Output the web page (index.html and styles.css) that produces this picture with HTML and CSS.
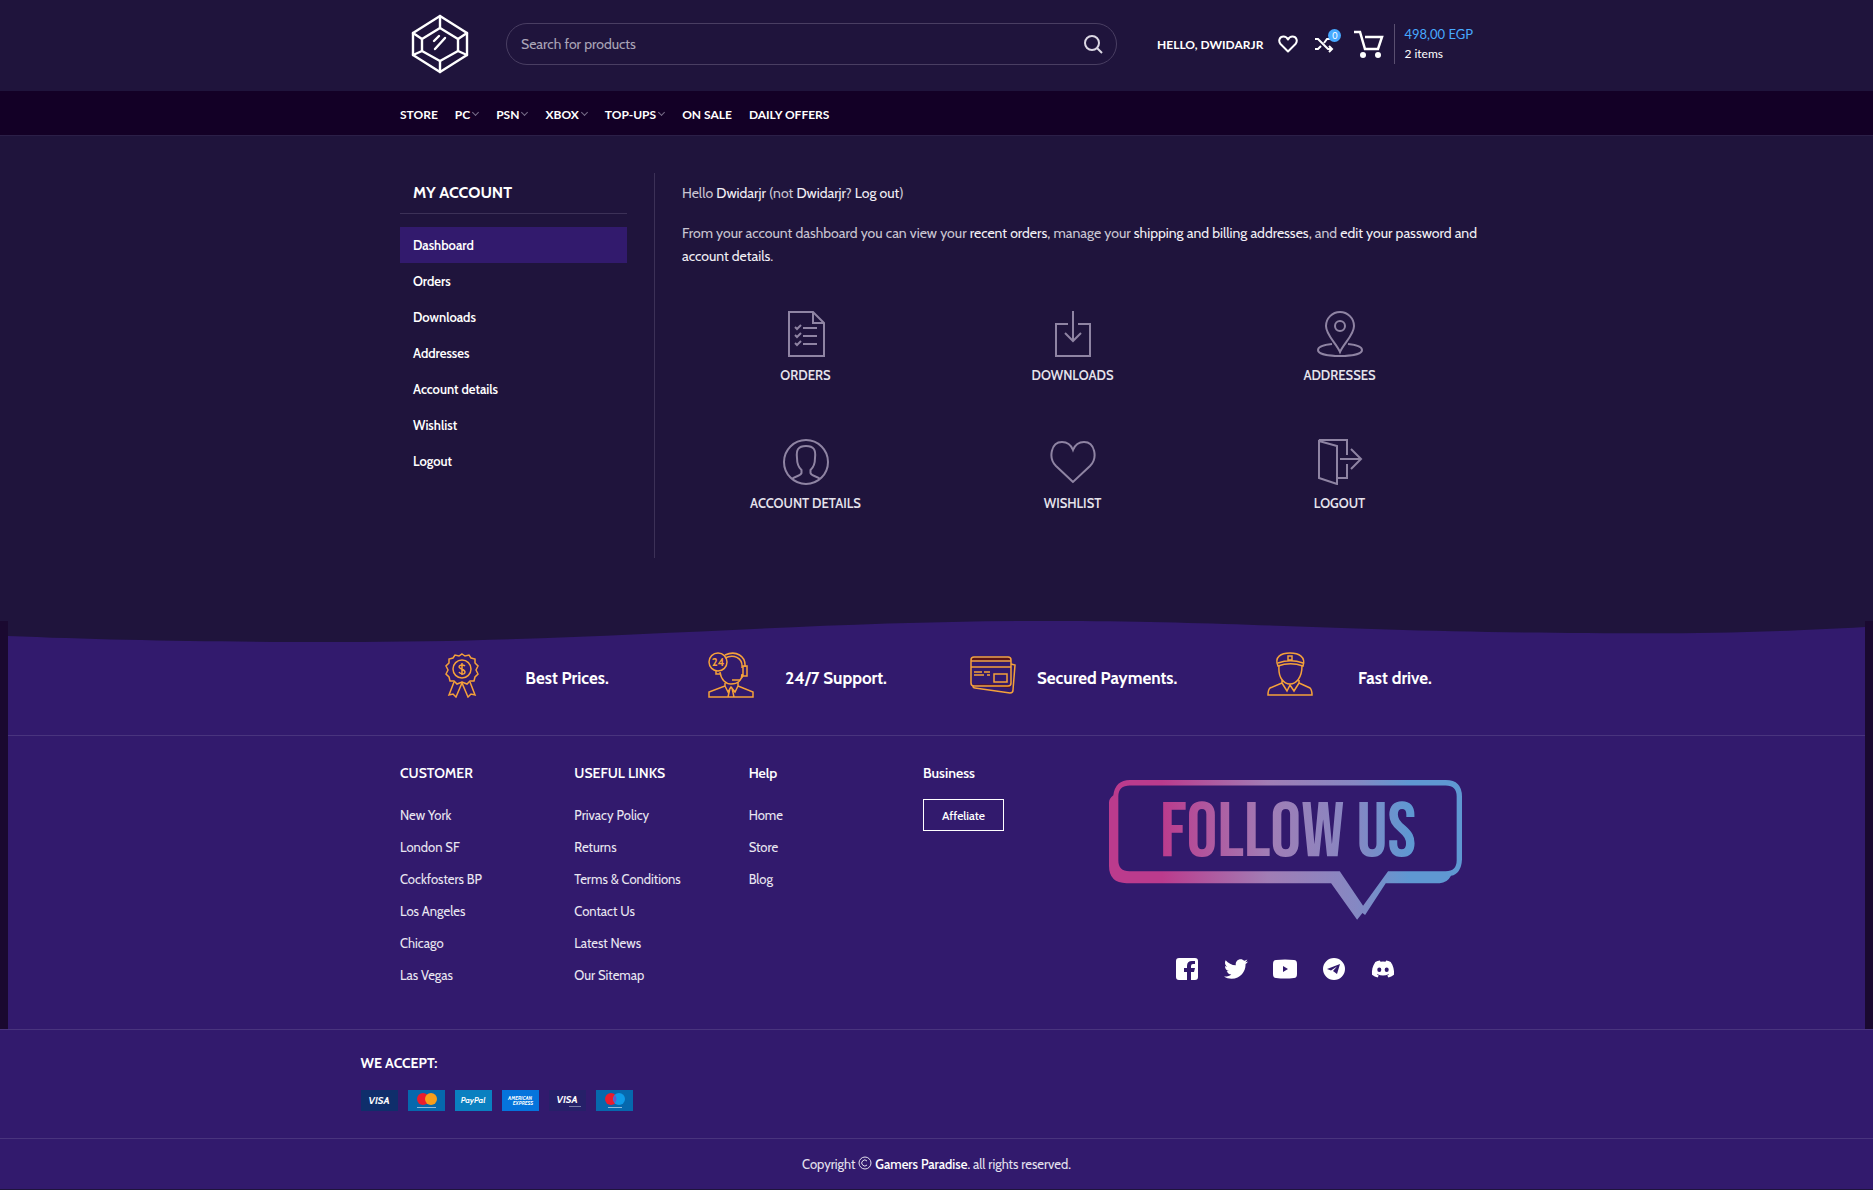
FILE: index.html
```html
<!DOCTYPE html>
<html lang="en">
  <head>
    <meta charset="UTF-8" />
    <meta name="viewport" content="width=device-width, initial-scale=1" />
    <title>My account - Gamers Paradise</title>
    <link rel="stylesheet" href="styles.css">
  </head>
  <body>
    <header>
      <div class="container header-row">
        <a href="#" class="logo" aria-label="Gamers Paradise">
          <svg viewBox="0 0 58 60" width="58" height="60" fill="none" stroke="#fff" stroke-width="2.400" stroke-linejoin="round" stroke-linecap="round">
            <path d="M29 2 56 19V41L29 58 2 41V19Z" />
            <path d="M29 14 47 25V37L29 47 11 37V25Z" />
            <path d="M29 2V14M56 19 47 25M56 41 47 37M29 58V47M2 41 11 37M2 19 11 25" />
            <path d="M23 27 28 22M24 35 34 24" />
          </svg>
        </a>

        <form class="search">
          <input type="text" aria-label="Search" placeholder="Search for products" />
          <button type="submit" aria-label="Search">
            <svg viewBox="0 0 20 20" width="20" height="20" fill="none" stroke="#dcd8e4" stroke-width="2">
              <circle cx="9" cy="9" r="7" />
              <path d="M14 14 19 19" />
            </svg>
          </button>
        </form>

        <div class="tools">
          <a href="#" class="hello">HELLO, DWIDARJR</a>
          <a href="#" class="tool" aria-label="Wishlist">
            <svg viewBox="0 0 20 18" width="20" height="18" fill="none" stroke="#fff" stroke-width="2" stroke-linejoin="round">
              <path d="M10 16.500 2.500 9C0 6 1.500 1.500 5.500 1.500 7.500 1.500 9 2.500 10 4.500 11 2.500 12.500 1.500 14.500 1.500 18.500 1.500 20 6 17.500 9Z" />
            </svg>
          </a>
          <a href="#" class="tool" aria-label="Compare">
            <svg viewBox="0 0 20 18" width="20" height="18" fill="none" stroke="#fff" stroke-width="2">
              <path d="M1 4H4L14 14H18M1 14H4L7 11M10 8 13 4H18M15 11 18 14 15 17" />
            </svg>
            <span class="badge">0</span>
          </a>
          <a href="#" class="cart">
            <svg viewBox="0 0 30 28" width="30" height="28" fill="none" stroke="#fff" stroke-width="2.500">
              <path d="M0 2H6L11 19H24L28 7H11" />
              <circle cx="9" cy="25" r="3" fill="#fff" stroke="none" />
              <circle cx="24" cy="25" r="3" fill="#fff" stroke="none" />
            </svg>
            <span class="cart-info">
              <span class="cart-total">498,00 EGP</span>
              <span>2 items</span>
            </span>
          </a>
        </div>
      </div>
    </header>

    <nav class="main-nav">
      <div class="container">
        <a href="#">STORE</a>
        <a href="#" class="has-menu">PC</a>
        <a href="#" class="has-menu">PSN</a>
        <a href="#" class="has-menu">XBOX</a>
        <a href="#" class="has-menu">TOP-UPS</a>
        <a href="#">ON SALE</a>
        <a href="#">DAILY OFFERS</a>
      </div>
    </nav>

    <main class="container account">
      <aside>
        <h3>MY ACCOUNT</h3>
        <ul>
          <li><a href="#" class="active">Dashboard</a></li>
          <li><a href="#">Orders</a></li>
          <li><a href="#">Downloads</a></li>
          <li><a href="#">Addresses</a></li>
          <li><a href="#">Account details</a></li>
          <li><a href="#">Wishlist</a></li>
          <li><a href="#">Logout</a></li>
        </ul>
      </aside>

      <section class="account-content">
        <p>Hello <strong>Dwidarjr</strong> (not <strong>Dwidarjr</strong>? <a href="#">Log out</a>)</p>
        <p>
          From your account dashboard you can view your <a href="#">recent orders</a>, manage your
          <a href="#">shipping and billing addresses</a>, and <a href="#">edit your password and account details</a>.
        </p>

        <div class="account-links">
          <a href="#">
            <svg viewBox="0 0 46 46">
              <path d="M6 1H30L41 12V45H6ZM30 1V12H41" />
              <path d="M12 16 14 18 18 14M20 17H34M12 24 14 26 18 22M20 25H34M12 32 14 34 18 30M20 33H34" />
            </svg>
            ORDERS
          </a>
          <a href="#">
            <svg viewBox="0 0 46 46">
              <path d="M18 13H6V45H40V13H28" />
              <path d="M23 0V30M15 22 23 30 31 22" />
            </svg>
            DOWNLOADS
          </a>
          <a href="#">
            <svg viewBox="0 0 46 46">
              <path d="M23 41C19 32 9 24 9 15A14 14 0 0 1 37 15C37 24 27 32 23 41Z" />
              <circle cx="23" cy="15" r="5" />
              <path d="M15 33C6 34 1 36 1 39 1 43 11 45 23 45S45 43 45 39C45 36 40 34 31 33" />
            </svg>
            ADDRESSES
          </a>
          <a href="#">
            <svg viewBox="0 0 46 46">
              <circle cx="23" cy="23" r="22" />
              <path d="M9 40C12 37 18 37 18.500 34V31C15 28 14 25 14 19 13 11 15 7 23 7S33 11 32 19C32 25 31 28 27.500 31V34C28 37 34 37 37 40" />
            </svg>
            ACCOUNT DETAILS
          </a>
          <a href="#">
            <svg viewBox="0 0 46 46">
              <path d="M23 43 6 27C-2 19 1 3 12 3 18 3 21 6 23 11 25 6 28 3 34 3 45 3 48 19 40 27Z" />
            </svg>
            WISHLIST
          </a>
          <a href="#">
            <svg viewBox="0 0 46 46">
              <path d="M2 2 20 7V45L2 39ZM2 1H30V16M30 25V39H20" />
              <path d="M23 20H44M34 10 44 20 34 30" />
            </svg>
            LOGOUT
          </a>
        </div>
      </section>
    </main>

    <footer>
      <div class="footer-frame">
        <div class="prefooter">
          <svg class="wave" viewBox="0 0 1857 22" preserveAspectRatio="none">
            <path d="M0 0H1857V6C1750 12 1680 13 1580 12 1350 11 1250 1 1060 0 800 -1 600 21 330 21 200 21 100 19 0 15Z" />
          </svg>
          <div class="container features">
            <div class="feature">
              <svg viewBox="0 0 46 46">
                <path d="M23 2 26 4 30 3 32 6 36 7 36 11 39 14 37 18 39 22 36 25 35 29 31 29 28 32 23 30 18 32 15 29 11 29 10 25 7 22 9 18 7 14 10 11 10 7 14 6 16 3 20 4Z" />
                <circle cx="23" cy="17" r="9" />
                <path d="M15 30 10 43 14 42 17 45 23 31 29 45 32 42 36 43 31 30" />
                <path d="M26 14C24 12 20 13 20 15S26 17 26 20 21 22 20 20M23 11V23" />
              </svg>
              <h4>Best Prices.</h4>
            </div>
            <div class="feature">
              <svg viewBox="0 0 46 46">
                <circle cx="10" cy="10" r="9" />
                <text x="10" y="14" text-anchor="middle">24</text>
                <path d="M17 3C28-2 38 4 37 15M17 6C25 2 35 5 34 16" />
                <path d="M37 14H39V24H35V14ZM8 19V22H12M12 20C13 28 18 32 23 32 30 32 34 28 34 22M24 28H32L35 24" />
                <path d="M17 31V34L1 40V45H45V40L30 34V30M17 34 20 40 23 35 27 40 30 34M22 36 20 45H26L24 36" />
              </svg>
              <h4>24/7 Support.</h4>
            </div>
            <div class="feature">
              <svg viewBox="0 0 46 46">
                <path d="M3 6H38Q40 6 41 8H1Q1 6 3 6ZM2 32 40 33 40 36Z" fill="#5c1415" stroke="none" />
                <rect x="1" y="5" width="40" height="29" rx="3" />
                <path d="M1 9H41M1 15H41M4 20H12M14 20H20M4 23H14M17 23H20" />
                <rect x="24" y="22" width="13" height="8" />
                <path d="M41 12 45 13 43 38Q43 41 40 41L5 36Q3 36 3 34" />
              </svg>
              <h4>Secured Payments.</h4>
            </div>
            <div class="feature">
              <svg viewBox="0 0 46 46">
                <path d="M11 14C7 5 14 1 23 1S39 5 36 14C28 11 19 11 11 14ZM11 11C19 8 28 8 36 11M21 4H25V8H21Z" />
                <path d="M12 14C11 26 17 32 23 32S35 26 35 14M15 28V31L3 36Q1 38 1 43H45Q45 38 43 36L32 31V28M15 31 20 39 23 33 27 39 32 31" />
              </svg>
              <h4>Fast drive.</h4>
            </div>
          </div>
        </div>

        <div class="container footer-columns">
          <div>
            <h5>CUSTOMER</h5>
            <ul>
              <li><a href="#">New York</a></li>
              <li><a href="#">London SF</a></li>
              <li><a href="#">Cockfosters BP</a></li>
              <li><a href="#">Los Angeles</a></li>
              <li><a href="#">Chicago</a></li>
              <li><a href="#">Las Vegas</a></li>
            </ul>
          </div>
          <div>
            <h5>USEFUL LINKS</h5>
            <ul>
              <li><a href="#">Privacy Policy</a></li>
              <li><a href="#">Returns</a></li>
              <li><a href="#">Terms &amp; Conditions</a></li>
              <li><a href="#">Contact Us</a></li>
              <li><a href="#">Latest News</a></li>
              <li><a href="#">Our Sitemap</a></li>
            </ul>
          </div>
          <div>
            <h5>Help</h5>
            <ul>
              <li><a href="#">Home</a></li>
              <li><a href="#">Store</a></li>
              <li><a href="#">Blog</a></li>
            </ul>
          </div>
          <div>
            <h5>Business</h5>
            <button type="button" class="btn-outline">Affeliate</button>
          </div>
          <div class="follow">
            <svg class="follow-us" viewBox="57 60 1060 425">
              <defs>
                <linearGradient id="follow-gradient" gradientUnits="userSpaceOnUse" x1="57" y1="0" x2="1117" y2="0">
                  <stop offset="0.150" stop-color="#bb3b8d" />
                  <stop offset="0.450" stop-color="#a17db5" />
                  <stop offset="0.700" stop-color="#8588c3" />
                  <stop offset="0.850" stop-color="#5f98d2" />
                </linearGradient>
              </defs>
              <path fill="url(#follow-gradient)" fill-rule="evenodd" d="M120 62H1068Q1117 62 1117 112V300Q1115 343 1084 350 1072 372 1050 372H888L826 468 818 462 802 482 724 372H110Q57 372 57 320V130Q57 118 70 108 76 62 120 62ZM120 79H1068Q1101 79 1101 112V303Q1101 336 1068 336H895L820 440 750 336H118Q85 336 85 303V112Q85 79 120 79Z" />
              <text x="595" y="291" text-anchor="middle" fill="url(#follow-gradient)">FOLLOW US</text>
            </svg>
            <div class="socials">
              <a href="#" aria-label="Facebook">
                <svg viewBox="0 0 24 24"><path fill-rule="evenodd" d="M4 1H20Q23 1 23 4V20Q23 23 20 23H16V15H19L20 11H16V9Q16 7 18 7H20V4H17Q12 4 12 9V11H9V15H12V23H4Q1 23 1 20V4Q1 1 4 1Z" /></svg>
              </a>
              <a href="#" aria-label="Twitter">
                <svg viewBox="0 0 512 512"><path d="M459.370 151.716c.325 4.548.325 9.097.325 13.645 0 138.720-105.583 298.558-298.558 298.558-59.452 0-114.680-17.219-161.137-47.106 8.447.974 16.568 1.299 25.340 1.299 49.055 0 94.213-16.568 130.274-44.832-46.132-.975-84.792-31.188-98.112-72.772 6.498.974 12.995 1.624 19.818 1.624 9.421 0 18.843-1.300 27.614-3.573-48.081-9.747-84.143-51.980-84.143-102.985v-1.299c13.969 7.797 30.214 12.670 47.431 13.319-28.264-18.843-46.781-51.005-46.781-87.391 0-19.492 5.197-37.360 14.294-52.954 51.655 63.675 129.300 105.258 216.365 109.807-1.624-7.797-2.599-15.918-2.599-24.040 0-57.828 46.782-104.934 104.934-104.934 30.213 0 57.502 12.670 76.670 33.137 23.715-4.548 46.456-13.320 66.599-25.340-7.798 24.366-24.366 44.833-46.132 57.827 21.117-2.273 41.584-8.122 60.426-16.243-14.292 20.791-32.161 39.308-52.628 54.253z" /></svg>
              </a>
              <a href="#" aria-label="YouTube">
                <svg viewBox="0 0 24 24"><path fill-rule="evenodd" d="M3 3Q12 2 21 3 24 3 24 7V17Q24 21 21 21 12 22 3 21 0 21 0 17V7Q0 3 3 3ZM10 9V15L15 12Z" /></svg>
              </a>
              <a href="#" aria-label="Telegram">
                <svg viewBox="0 0 24 24"><path fill-rule="evenodd" d="M12 1A11 11 0 1 1 12 23 11 11 0 1 1 12 1ZM18 7 5 12 9 13.500 15 9.500 11 14 15 17Z" /></svg>
              </a>
              <a href="#" aria-label="Discord">
                <svg viewBox="-1 -1 26 26"><path fill-rule="evenodd" d="M20.300 4.400A19.800 19.800 0 0 0 15.400 2.900L14.700 4.200Q12 3.800 9.300 4.200L8.600 2.900A19.800 19.800 0 0 0 3.700 4.400C.5 9 -.3 13.600.1 18.100Q3 20.300 6.200 21.200L7.400 19.100 5.500 18.200 6 17.800Q12 20.400 18 17.800L18.500 18.200 16.600 19.100 17.900 21.200Q21 20.300 23.900 18.100C24.400 13 23.100 8.400 20.300 4.400ZM8 10.500A2.200 2.400 0 1 1 8 15.300 2.200 2.400 0 1 1 8 10.500ZM16 10.500A2.200 2.400 0 1 1 16 15.300 2.200 2.400 0 1 1 16 10.500Z" /></svg>
              </a>
            </div>
          </div>
        </div>
      </div>

      <div class="accept">
        <div class="container container-wide">
          <h5>WE ACCEPT:</h5>
          <div class="cards">
            <svg viewBox="0 0 37 21"><rect width="37" height="21" fill="#0f2e6b" /><text x="18" y="14" font-size="10">VISA</text></svg>
            <svg viewBox="0 0 37 21"><rect width="37" height="21" fill="#0668ad" /><circle cx="15" cy="9" r="6" fill="#eb1c2d" /><circle cx="23" cy="9" r="6" fill="#f79e1b" /><path d="M9 17.500H28" stroke="#8fb9da" /></svg>
            <svg viewBox="0 0 37 21"><rect width="37" height="21" fill="#0a80c0" /><text x="18" y="13" font-size="8">PayPal</text></svg>
            <svg viewBox="0 0 37 21"><rect width="37" height="21" fill="#0574dc" /><text x="18" y="10" font-size="5">AMERICAN</text><text x="21" y="15" font-size="5">EXPRESS</text></svg>
            <svg viewBox="0 0 37 21"><rect width="37" height="21" fill="#262069" /><text x="18" y="13" font-size="10">VISA</text><path d="M20 16.500H32" stroke="#7a7ba8" /></svg>
            <svg viewBox="0 0 37 21"><rect width="37" height="21" fill="#0668ad" /><circle cx="15" cy="9" r="6" fill="#eb1c2d" /><circle cx="23" cy="9" r="6" fill="#0f9be8" /><path d="M19 5Q22 9 19 13 16 9 19 5Z" fill="#6c54c8" /><path d="M12 17.500H26" stroke="#8fb9da" /></svg>
          </div>
        </div>
      </div>

      <div class="copyright">
        Copyright
        <svg viewBox="0 0 14 14" width="14" height="14" fill="none" stroke="#e4e0ee">
          <circle cx="7" cy="7" r="6" />
          <path d="M9 5A3 3 0 1 0 9 9" />
        </svg>
        <a href="#">Gamers Paradise</a>. all rights reserved.
      </div>
    </footer>
  </body>
</html>
```
FILE: styles.css
```css
:root {
  --bg-color: #1f143c;
  --nav-color: #130026;
  --footer-color: #321a6d;
  --frame-color: #1a0930;
  --text-color: #c9c5d2;
  --border-color: #3c3157;
  --footer-border: #49347e;
  --icon-color: #8f84a3;
  --accent-color: #47a9ff;
  --orange: #f5a13a;
}

* {
  box-sizing: border-box;
}

body {
  margin: 0;
  font-family: "Cabin", "Lato", sans-serif;
  font-size: 14px;
  line-height: 23px;
  color: var(--text-color);
  background-color: var(--bg-color);
}

a {
  color: #fff;
  text-decoration: none;
}

ul {
  list-style: none;
  margin: 0;
  padding: 0;
}

h3,
h4,
h5 {
  margin: 0;
  color: #fff;
}

svg {
  display: block;
}

.container {
  width: 100%;
  max-width: 1103px;
  margin: 0 auto;
  padding: 0 15px;
}

.container-wide {
  max-width: 1182px;
}

/* header */
.header-row {
  display: flex;
  align-items: center;
  height: 91px;
  padding-bottom: 3px;
}

.logo {
  width: 106px;
  padding-left: 11px;
}

.search {
  display: flex;
  align-items: center;
  flex: 1;
  height: 42px;
  padding: 0 13px 0 14px;
  border: 1px solid #493e62;
  border-radius: 21px;
}

.search input {
  flex: 1;
  min-width: 0;
  padding: 0;
  border: none;
  outline: none;
  background: none;
  font: inherit;
  color: #fff;
}

.search input::placeholder {
  color: #aaa4b7;
}

.search button {
  padding: 0;
  border: none;
  background: none;
  cursor: pointer;
}

.tools {
  display: flex;
  align-items: center;
  width: 356px;
  padding-left: 40px;
  font-family: "Lato", sans-serif;
}

.hello {
  margin-right: auto;
  font-size: 12px;
  font-weight: bold;
}

.tool {
  position: relative;
  margin-right: 16px;
}

.badge {
  position: absolute;
  top: -6px;
  right: -7px;
  width: 13px;
  height: 13px;
  border-radius: 50%;
  background-color: var(--accent-color);
  font-size: 9px;
  line-height: 13px;
  text-align: center;
}

.cart {
  display: flex;
  align-items: center;
  margin-left: 4px;
}

.cart-info {
  display: flex;
  flex-direction: column;
  margin-left: 10px;
  padding-left: 9px;
  border-left: 1px solid #5a4f70;
  font-size: 12px;
  line-height: 20px;
}

.cart-total {
  font-size: 13px;
  color: var(--accent-color);
}

.main-nav {
  background-color: var(--nav-color);
  border-bottom: 1px solid #2b1f47;
}

.main-nav .container {
  display: flex;
  gap: 17px;
  font-family: "Lato", sans-serif;
  font-size: 12px;
  font-weight: bold;
  line-height: 40px;
  padding-top: 4px;
}

.has-menu {
  display: flex;
  align-items: center;
  gap: 3px;
}

.has-menu::after {
  content: "";
  width: 4px;
  height: 4px;
  margin: 0 1px 5px 0;
  border-right: 1px solid #776c88;
  border-bottom: 1px solid #776c88;
  transform: rotate(45deg);
}

/* account */
.account {
  display: flex;
  padding-top: 37px;
  padding-bottom: 63px;
}

aside {
  width: 255px;
  padding-right: 27px;
  border-right: 1px solid var(--border-color);
}

aside h3 {
  padding: 0 13px;
  font-size: 16px;
  line-height: 40px;
  border-bottom: 1px solid var(--border-color);
  margin-bottom: 13px;
}

aside li a {
  display: block;
  padding: 0 13px;
  font-size: 13px;
  font-weight: 600;
  line-height: 36px;
}

aside li a.active {
  background-color: var(--footer-color);
}

.account-content {
  flex: 1;
  padding: 9px 0 24px 17px;
}

.account-content p {
  margin: 0 -15px 17px 0;
  padding-left: 10px;
}

.account-content strong,
.account-content p a {
  font-weight: normal;
  color: #f1eff5;
}

.account-links {
  display: grid;
  grid-template-columns: repeat(3, 1fr);
  row-gap: 12px;
  margin-top: 23px;
}

.account-links a {
  display: flex;
  flex-direction: column;
  align-items: center;
  gap: 7px;
  padding: 20px 0 19px;
  font-size: 13px;
  font-weight: 600;
  color: #e6e3ec;
}

.account-links a:nth-child(-n + 3) {
  padding-bottom: 20px;
}

.account-links svg {
  width: 46px;
  height: 46px;
  fill: none;
  stroke: var(--icon-color);
  stroke-width: 2;
}

/* footer */
footer {
  background-color: var(--footer-color);
  color: #e4e0ee;
}

.footer-frame {
  border: solid var(--frame-color);
  border-width: 0 8px;
}

.prefooter {
  height: 115px;
  border-bottom: 1px solid var(--footer-border);
}

.wave {
  width: 100%;
  height: 22px;
  fill: var(--bg-color);
}

.features {
  display: grid;
  grid-template-columns: 269fr 262fr 297fr 210fr;
  padding: 9px 11px 0 54px;
}

.feature {
  display: flex;
}

.feature svg {
  width: 46px;
  height: 46px;
  fill: none;
  stroke: var(--orange);
  stroke-width: 1.5;
}

.feature text {
  fill: var(--orange);
  stroke: none;
  font-size: 11px;
  font-weight: bold;
}

.feature h4 {
  min-width: 164px;
  margin-top: 14px;
  padding: 0 21px;
  font-size: 17px;
  line-height: 24px;
  text-align: center;
  white-space: nowrap;
}

.footer-columns {
  display: grid;
  grid-template-columns: repeat(4, 174fr) 375fr;
  padding-top: 26px;
  padding-bottom: 38px;
}

.footer-columns h5 {
  font-size: 14px;
  font-weight: 600;
  margin-bottom: 14px;
}

.footer-columns li {
  font-size: 13px;
  line-height: 32px;
}

.footer-columns li a {
  color: #e9e6f1;
}

.btn-outline {
  display: block;
  height: 32px;
  padding: 0 18px;
  border: 1px solid #fff;
  background: none;
  color: #fff;
  font-family: inherit;
  font-size: 12px;
  font-weight: 500;
  cursor: pointer;
}

.follow {
  display: flex;
  flex-direction: column;
  align-items: center;
  gap: 36px;
  padding-top: 17px;
}

.follow-us {
  width: 353px;
  height: 142px;
}

.follow-us text {
  font-family: "Bebas Neue", "Roboto Condensed", "Liberation Sans Narrow", sans-serif;
  font-size: 232px;
}

.socials {
  display: flex;
  gap: 25px;
}

.socials svg {
  width: 24px;
  height: 24px;
  fill: #fff;
}

.accept {
  border-top: 1px solid var(--footer-border);
  padding: 22px 0 27px;
}

.accept h5 {
  font-size: 14px;
  margin-bottom: 15px;
}

.cards {
  display: flex;
  gap: 10px;
}

.cards svg {
  width: 37px;
  height: 21px;
}

.cards text {
  fill: #fff;
  font-weight: bold;
  font-style: italic;
  text-anchor: middle;
}

.copyright {
  border-top: 1px solid var(--footer-border);
  padding: 14px 15px 13px;
  font-size: 13px;
  text-align: center;
}

.copyright svg {
  display: inline-block;
  vertical-align: -1px;
}

.copyright a {
  font-weight: 500;
}

@media (max-width: 900px) {
  .header-row,
  .account {
    flex-wrap: wrap;
    height: auto;
  }

  .features,
  .footer-columns {
    grid-template-columns: 1fr 1fr;
  }

  .prefooter {
    height: auto;
  }
}
```
